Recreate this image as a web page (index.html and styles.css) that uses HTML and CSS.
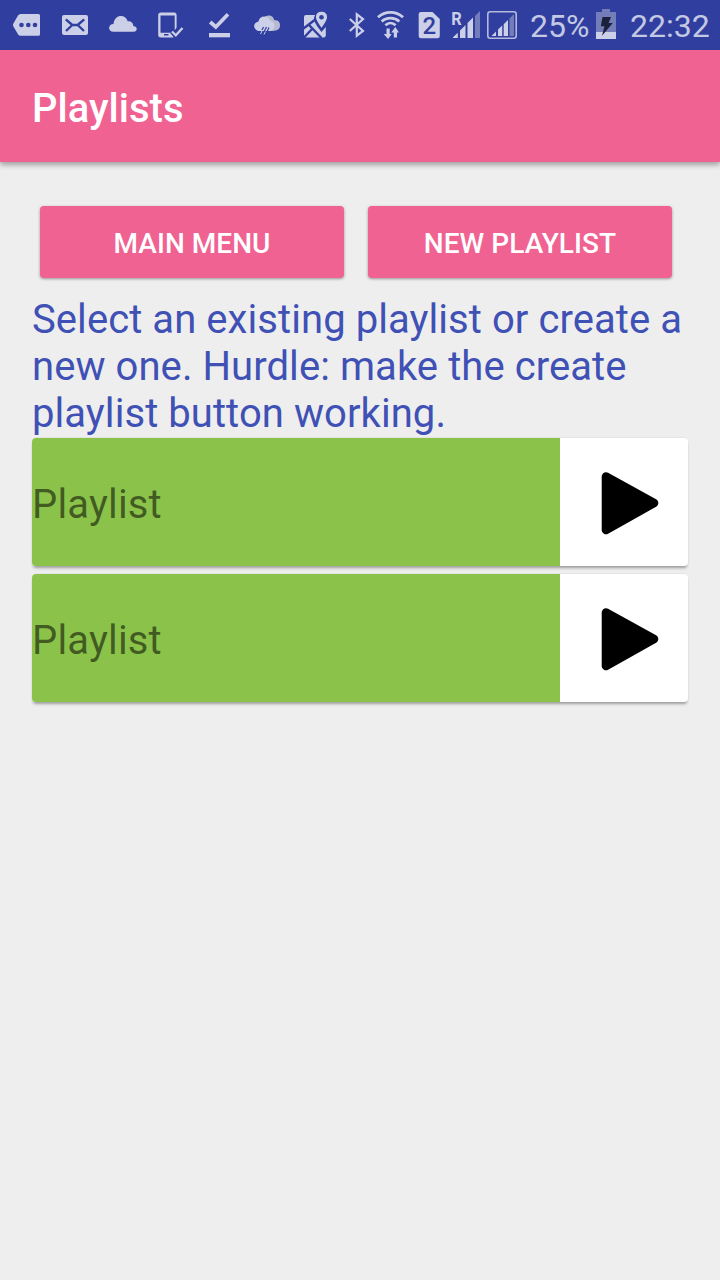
FILE: index.html
```html
<!DOCTYPE html>
<html lang="en">
<head>
<meta charset="utf-8">
<title>Playlists</title>
<link rel="stylesheet" href="styles.css">
</head>
<body>
<header class="status-bar">
  <div class="status-icons">
    <svg width="50" height="50" viewBox="0 0 50 50"><path class="fill" d="M20.500 14H38.500Q40 14 40 15.500V34.300Q40 35.800 38.500 35.800H20.500Q19 35.800 18 34.300L13.400 26.500Q12.500 25 13.400 23.500L18 15.500Q19 14 20.500 14Z"/><g class="cut"><circle cx="21.500" cy="25" r="2.300"/><circle cx="28.300" cy="25" r="2.300"/><circle cx="35" cy="25" r="2.300"/></g></svg>
    <svg width="48" height="50" viewBox="50 0 48 50"><rect class="fill" x="62" y="15" width="26" height="20" rx="2"/><path class="cut-line" d="M65.800 19.300L72.300 25H77.700L84.200 19.300M66 31L72.300 25M84 31L77.700 25"/></svg>
    <svg width="50" height="50" viewBox="98 0 50 50"><path class="fill" d="M113.500 31.800C107.500 31.800 107.800 24 113.500 24C114.500 14 125.500 14 127.700 21.200C131.500 20.700 133.300 23.500 133.300 26C138 26.500 137.800 31.800 133.500 31.800Z"/></svg>
    <svg width="47" height="50" viewBox="148 0 47 50"><path class="fill" fill-rule="evenodd" d="M161 12.500H174.500Q176.600 12.500 176.600 15V27.500L174.700 30.500V15.500H160.500V32.700H171L173.500 37.500H161Q158.200 37.500 158.200 35V15Q158.200 12.500 161 12.500Z"/><path class="cut" d="M164 34H168.500V35.500H164Z"/><path class="halo" d="M172 31.500L175.800 35.300L182.500 28"/><path class="line" d="M172 31.500L175.800 35.300L182.500 28" stroke-width="2.300"/></svg>
    <svg width="48" height="50" viewBox="195 0 48 50"><path class="line" d="M210.200 22L215.800 27L228 14.200" stroke-width="3.700"/><rect class="fill" x="209" y="33" width="21" height="4.300"/></svg>
    <svg width="48" height="50" viewBox="243 0 48 50"><path class="dim" d="M264 18C267 13.500 274 15.500 274 20C279 20 280.300 23 280 26C279.500 30.500 275 31 271 31H264Z"/><path class="fill" d="M258.500 31C253 30 252.500 22.500 258.500 21.500C259.500 15.500 267.500 14.500 270.500 21C274 21.500 275 25 274 27.500C273 30.500 270 31 267 31Z"/><path class="rain" d="M263.500 27L262 30M266.500 27L263.500 33M269 27.500L266.500 33"/><path class="line" d="M260.500 34L262 31M264 34.500L265.500 31.500" stroke-width="1"/></svg>
    <svg width="46" height="50" viewBox="291 0 46 50"><path class="fill" d="M306 15H315.500L314 18Q314 22 317 26L321.500 32L325.800 27V35.500Q325.800 37.500 323.500 37.500H306Q304 37.500 304 35.500V17Q304 15 306 15Z"/><path class="cut-line" d="M303.500 28.500L316 19M309.500 25.500L321.500 38M304 37.500L312 29" stroke-width="1.800"/><path class="pin-halo" d="M321.500 29C318.500 25 315.200 21 315.200 17.300C315.200 8.900 327.800 8.900 327.800 17.300C327.800 21 324.500 25 321.500 29Z"/><circle class="cut" cx="321.500" cy="17.200" r="2.300"/></svg>
    <svg width="34" height="50" viewBox="337 0 34 50"><path class="line" d="M349.800 19L363 31L356.800 35.700V14.300L363 19L349.800 31" stroke-width="2.200"/></svg>
    <svg width="37" height="50" viewBox="371 0 37 50"><g class="line" stroke-width="2.700"><path d="M378 17.300C385 10.700 396 10.700 403 17.300"/><path d="M381.700 21.400C386.500 16.900 394.500 16.900 399.300 21.400"/><path d="M385.400 25.300C388.500 22.200 392.500 22.200 395.600 25.300"/></g><path class="fill" d="M386.500 28.500H389.700V34H391.700L388.100 39L383.700 34H386.500ZM393.800 37.500V32.500H391.300L395.300 27L399 32.500H397V37.500Z"/></svg>
    <svg width="38" height="50" viewBox="408 0 38 50"><path class="fill" d="M421 12H432.500L439.800 19V36Q439.800 38.300 437.500 38.300H421Q418.700 38.300 418.700 36V14.300Q418.700 12 421 12Z"/><text class="sim-number" x="429.200" y="33.500">2</text></svg>
    <svg width="38" height="50" viewBox="446 0 38 50"><text class="roaming" x="451.300" y="25" textLength="10.500" lengthAdjust="spacingAndGlyphs">R</text><path class="fill" d="M453 38V37.300L457.800 32.700V38ZM460 38V30.500L465.500 25V38ZM467.500 38V23L473 17.500V38Z"/><path class="faded" d="M475 38V16L480 11V38Z"/></svg>
    <svg width="42" height="50" viewBox="484 0 42 50"><rect class="frame" x="487.800" y="11.800" width="28.400" height="26.400" rx="2.500"/><path class="fill" d="M491.500 36L496 31.500V36ZM498 36V29.500L502.200 25.500V36ZM503.700 36V24.200L508 20V36Z"/><path class="faded" d="M509.500 36V18.500L514 14V36Z"/></svg>
  </div>
  <span class="percent">25%</span>
  <svg class="battery" width="20" height="50" viewBox="596 0 20 50"><path class="faded" d="M596 12H602V9H610V12H616V32H596Z"/><path class="fill" d="M596 32H616V39H596Z"/><path class="bolt" d="M602.500 17H611L608.500 23H612.800L602 35.800L604.500 26.300H600.800Z"/></svg>
  <time class="clock">22:32</time>
</header>
<div class="app-bar"><h1 class="title">Playlists</h1></div>
<main class="content">
  <div class="actions">
    <button class="button">MAIN MENU</button>
    <button class="button">NEW PLAYLIST</button>
  </div>
  <p class="hint">Select an existing playlist or create a new one. Hurdle: make the create playlist button working.</p>
  <div class="cards">
    <div class="card">
      <span class="name">Playlist</span>
      <svg class="play" width="128" height="128" viewBox="0 0 128 128"><path d="M46 38.500L94 65L46 92Z"/></svg>
    </div>
    <div class="card">
      <span class="name">Playlist</span>
      <svg class="play" width="128" height="128" viewBox="0 0 128 128"><path d="M46 38.500L94 65L46 92Z"/></svg>
    </div>
  </div>
</main>
</body>
</html>
```
FILE: styles.css
```css
* { box-sizing: border-box; }
body {
  margin: 0;
  min-height: 1280px;
  background: #eee;
  font-family: Roboto, "Liberation Sans", sans-serif;
  font-size: 40px;
}
svg { display: block; flex: none; }

.status-bar {
  display: flex;
  height: 50px;
  background: #303f9f;
  color: #c3c8e3;
  font-size: 32px;
  line-height: 53px;
  white-space: nowrap;
}
.status-icons { display: flex; width: 530px; flex: none; }
.percent { width: 66px; flex: none; }
.clock { margin-left: 14px; }
.fill { fill: #cbcfe7; }
.dim { fill: #b7bbd2; }
.faded { fill: #737db9; }
.cut { fill: #303f9f; }
.cut-line { fill: none; stroke: #303f9f; stroke-width: 2.400; }
.line { fill: none; stroke: #cbcfe7; }
.halo { fill: none; stroke: #303f9f; stroke-width: 5; }
.rain { fill: none; stroke: #303f9f; stroke-width: 1.200; }
.pin-halo { fill: #cbcfe7; stroke: #303f9f; stroke-width: 1.500; }
.frame { fill: none; stroke: #b4badc; stroke-width: 1.600; }
.bolt { fill: #1b2139; }
.sim-number { fill: #303f9f; font-size: 24px; font-weight: 500; text-anchor: middle; }
.roaming { fill: #cbcfe7; font-size: 17.500px; font-weight: 700; }

.app-bar {
  display: flex;
  align-items: center;
  height: 112px;
  padding: 4px 32px 0;
  background: #f06292;
  box-shadow: 0 3px 5px rgba(0, 0, 0, .32);
}
.title {
  margin: 0;
  color: #fff;
  font-size: 40px;
  font-weight: 500;
  line-height: 47px;
}
.content { padding: 44px 32px 0; }
.actions { display: flex; gap: 24px; padding: 0 16px 0 8px; }
.button {
  flex: 1;
  height: 72px;
  padding: 3px 0 0;
  border: 0;
  border-radius: 4px;
  background: #f06292;
  box-shadow: 0 1px 3px rgba(0, 0, 0, .38);
  color: #fff;
  font: 500 28px Roboto, "Liberation Sans", sans-serif;
  letter-spacing: .05px;
}
.hint {
  margin: 18px 0 0;
  color: #3f51b5;
  letter-spacing: .07px;
  line-height: 47px;
}
.cards { display: flex; flex-direction: column; gap: 8px; padding-top: 1px; }
.card {
  display: flex;
  height: 128px;
  overflow: hidden;
  border-radius: 4px;
  background: #fff;
  box-shadow: 0 3px 3px -1px rgba(0, 0, 0, .34), 0 -1px 0 -.5px rgba(0, 0, 0, .08);
}
.name {
  flex: 1;
  padding-top: 5px;
  background: #8bc34a;
  color: rgba(0, 0, 0, .54);
  letter-spacing: .16px;
  line-height: 124px;
}
.play path { stroke: #000; stroke-width: 8.600; stroke-linejoin: round; }
```
